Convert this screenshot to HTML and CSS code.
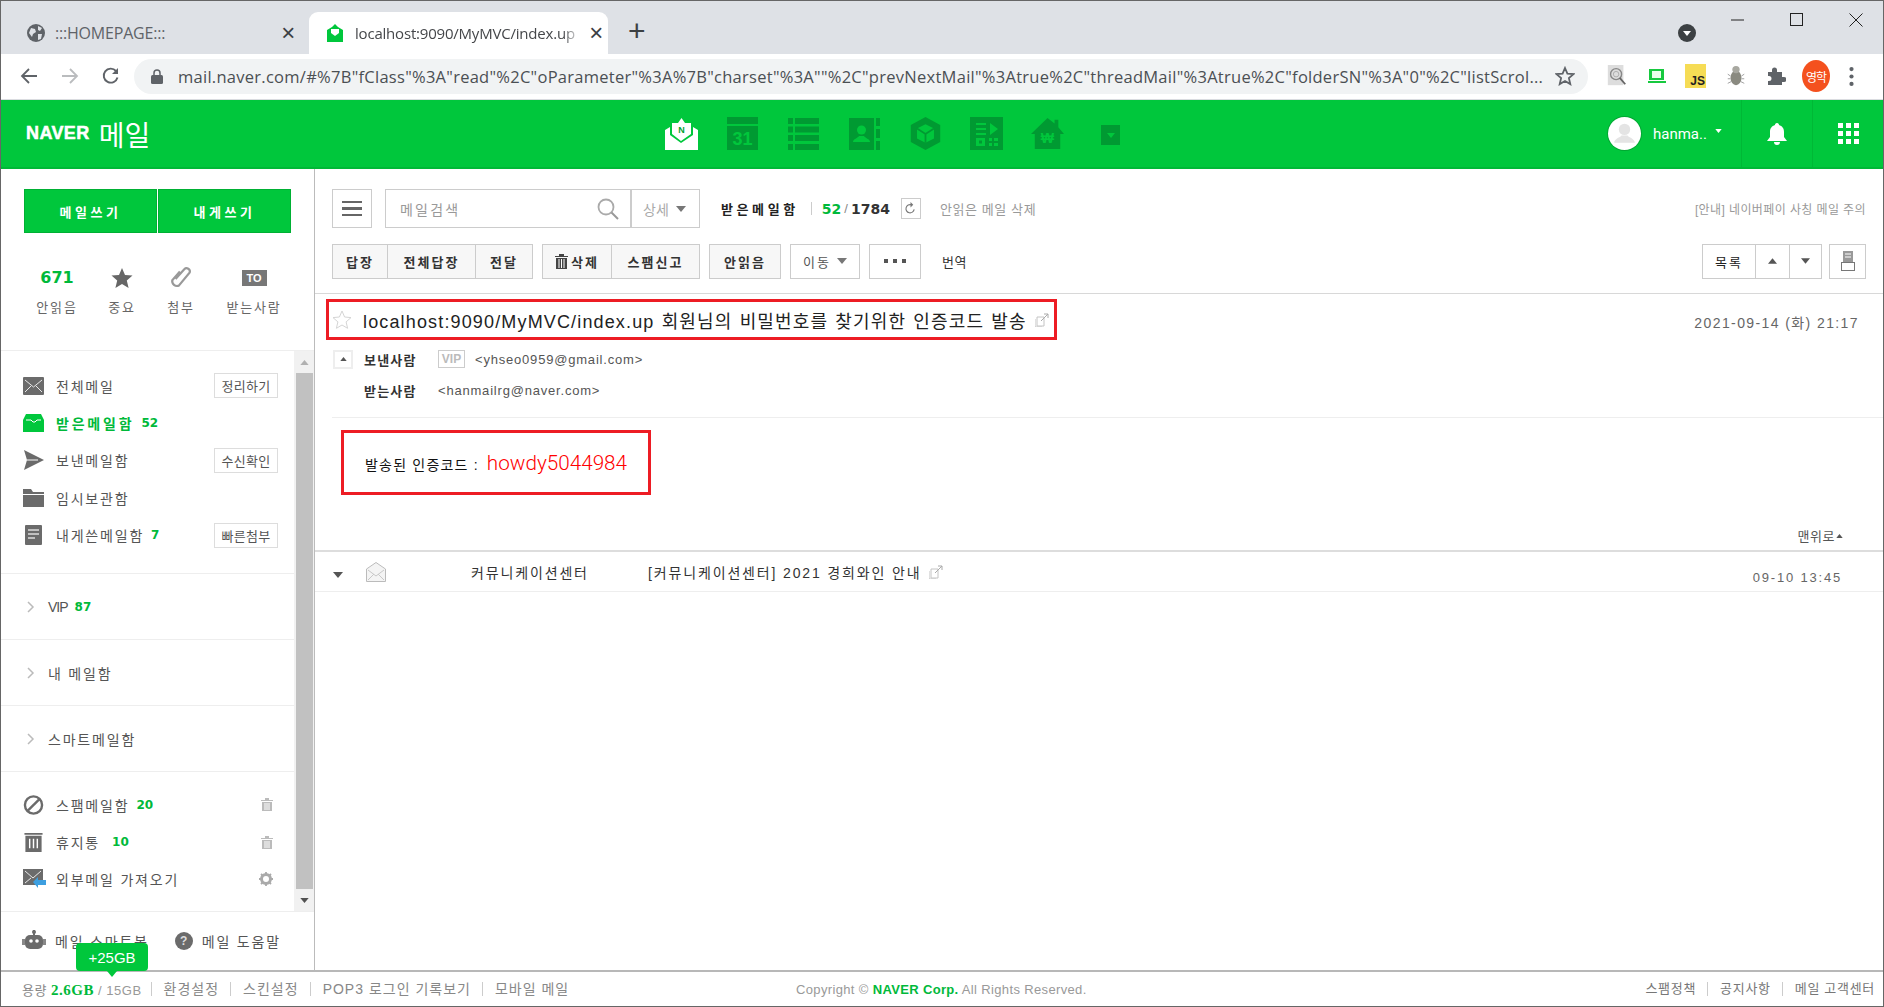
FILE: index.html
```html
<!DOCTYPE html>
<html lang="ko">
<head>
  <meta charset="UTF-8">
  <title>NAVER 메일</title>
  <link rel="stylesheet" href="styles.css">
</head>
<body>
<div class="window">

  <!-- browser tabs -->
  <div class="tabstrip">
    <div class="tab">
      <svg class="tab-icon" viewBox="0 0 18 18"><circle cx="9" cy="9" r="9" fill="#5f6368"/><path d="M4 4l4 1 1 3-3 2-1 3-3-4zM11 2l4 2-2 3-2-1zM11 10l4 0-1 5-3 1z" fill="#dee1e6"/></svg>
      <span class="tab-title">:::HOMEPAGE:::</span>
      <span class="tab-close">×</span>
    </div>
    <div class="tab tab-active">
      <svg class="tab-icon" viewBox="0 0 16 18"><path d="M0 6l5-3 3-3 3 3 5 3v12H0z" fill="#00c73c"/><path d="M4 5h8v4l-4 3-4-3z" fill="#fff"/></svg>
      <span class="tab-title fade">localhost:9090/MyMVC/index.up</span>
      <span class="tab-close">×</span>
    </div>
    <span class="tab-plus">+</span>
    <svg class="tab-search" viewBox="0 0 18 18"><circle cx="9" cy="9" r="9" fill="#3c4043"/><path d="M5 7h8l-4 5z" fill="#fff"/></svg>
    <div class="win-btns">
      <svg viewBox="0 0 14 14"><path d="M0 7h13" stroke="#222" fill="none"/></svg>
      <svg viewBox="0 0 14 14"><rect x=".5" y=".5" width="12" height="12" stroke="#222" fill="none"/></svg>
      <svg viewBox="0 0 14 14"><path d="M.5.5l13 13M13.5.5l-13 13" stroke="#222" fill="none"/></svg>
    </div>
  </div>

  <!-- address bar -->
  <div class="toolbar">
    <svg class="nav-icon" viewBox="0 0 18 18"><path d="M17 9H2M9 2L2 9l7 7" stroke="#5f6368" stroke-width="1.8" fill="none"/></svg>
    <svg class="nav-icon" viewBox="0 0 18 18"><path d="M1 9h15M9 2l7 7-7 7" stroke="#babcbe" stroke-width="1.8" fill="none"/></svg>
    <svg class="nav-icon" viewBox="0 0 18 18"><path d="M15.5 10.5A7 7 0 1 1 14 4" stroke="#5f6368" stroke-width="1.9" fill="none"/><path d="M16 1v6h-6z" fill="#5f6368"/></svg>
    <div class="addressbar">
      <svg class="lock" viewBox="0 0 12 15"><path d="M3 6V4a3 3 0 0 1 6 0v2" stroke="#5f6368" stroke-width="1.5" fill="none"/><rect y="6" width="12" height="9" rx="1.5" fill="#5f6368"/></svg>
      <span class="url">mail.naver.com/#%7B"fClass"%3A"read"%2C"oParameter"%3A%7B"charset"%3A""%2C"prevNextMail"%3Atrue%2C"threadMail"%3Atrue%2C"folderSN"%3A"0"%2C"listScrol...</span>
      <svg class="url-star" viewBox="0 0 20 20"><path d="M10 2l2.4 5.6 6.1.5-4.6 4 1.4 6L10 15l-5.3 3.1 1.4-6-4.6-4 6.1-.5z" stroke="#5f6368" stroke-width="1.8" fill="none"/></svg>
    </div>
    <div class="ext-icons">
      <svg viewBox="0 0 20 24"><rect width="17" height="22" fill="#ddd"/><circle cx="9" cy="10" r="6" fill="none" stroke="#888" stroke-width="1.5"/><circle cx="9" cy="10" r="3" fill="none" stroke="#aaa"/><path d="M13 14l6 7" stroke="#666" stroke-width="2"/></svg>
      <svg viewBox="0 0 20 20"><rect x="2" y="3" width="15" height="11" fill="#17c93f"/><rect x="5" y="5" width="9" height="7" fill="#eaffea"/><path d="M1 15h18v2H1z" fill="#17c93f"/></svg>
      <span class="ext-js">JS</span>
      <svg viewBox="0 0 20 24"><ellipse cx="10" cy="14" rx="6" ry="8" fill="#8a8a80"/><circle cx="10" cy="5" r="4" fill="#a8a8a0"/><path d="M1 10l3 2M1 15h3M1 20l4-2M19 10l-3 2M19 15h-3M19 20l-4-2" stroke="#999"/></svg>
      <svg viewBox="0 0 20 20"><path d="M2 6h4V4a2.5 2.5 0 0 1 5 0v2h5v5h2a2.5 2.5 0 0 1 0 5h-2v3H2v-4h1a2.5 2.5 0 0 0 0-5H2z" fill="#5f6368"/></svg>
      <span class="ext-user">영학</span>
      <svg class="ext-dots" viewBox="0 0 4 18"><circle cx="2" cy="2" r="2" fill="#5f6368"/><circle cx="2" cy="9" r="2" fill="#5f6368"/><circle cx="2" cy="16" r="2" fill="#5f6368"/></svg>
    </div>
  </div>

  <!-- naver header -->
  <header class="gnb">
    <div class="logo"><span class="logo-naver">NAVER</span><span class="logo-mail">메일</span></div>
    <nav class="gnb-apps">
      <svg viewBox="0 0 33 33"><path d="M0 13l5-3v8l11 8 12-8v-8l5 3v20H0z" fill="#fff"/><path d="M7 6h6l3.500-5L20 6h6v11l-10 7-9-7z" fill="#fff"/><text x="16.500" y="16" class="app-n">N</text></svg>
      <svg viewBox="0 0 33 33"><path d="M1 0h31v7H1z" fill="#009a32"/><path d="M1 9h31v24H1z" fill="#009a32"/><text x="16.500" y="28" class="app-31">31</text></svg>
      <svg viewBox="0 0 33 33"><path d="M1 1h5v6H1zM8 1h24v6H8zM1 9.500h5v6H1zM8 9.500h24v6H8zM1 18h5v6H1zM8 18h24v6H8zM1 27h5v6H1zM8 27h24v6H8z" fill="#009a32"/></svg>
      <svg viewBox="0 0 33 33"><path d="M1 1h25v32H1z" fill="#009a32"/><path d="M28 1h4v8h-4zM28 12h4v9h-4zM28 24h4v9h-4z" fill="#009a32"/><circle cx="13.500" cy="13" r="4.500" fill="#00c73c"/><path d="M5 25c0-3 5-4 6-6h5c1 2 6 3 6 6z" fill="#00c73c"/></svg>
      <svg viewBox="0 0 33 37"><path d="M16.500 0L33 9v19l-16.500 9L0 28V9z" fill="#009a32"/><path d="M16.500 8L26 13v11l-9.500 5L7 24V13z" fill="#00c73c"/><path d="M16.500 19v10M7 13l9.500 6 9.500-6" stroke="#009a32" stroke-width="2" fill="none"/></svg>
      <svg viewBox="0 0 33 33"><path d="M0 0h33v33H0z" fill="#009a32"/><path d="M6 6h10v2H6zM6 11h10v2H6zM6 16h10v2H6zM20 6l8 6-8 6z" fill="#00c73c"/><path d="M6 21h9v8H6zM19 21h3v3h-3zM24 21h4v3h-4zM19 26h3v3h-3zM24 26h4v3h-4z" fill="#00c73c"/><path d="M9 23.500h3v3H9z" fill="#009a32"/></svg>
      <svg viewBox="0 0 35 33"><path d="M17.500 0L25 6V2h4v8l6 7h-4v16H4V17H0z" fill="#009a32"/><text x="17.500" y="27" class="app-won">₩</text></svg>
      <span class="app-more"><svg viewBox="0 0 10 6"><path d="M0 0h10L5 6z" fill="#00c73c"/></svg></span>
    </nav>
    <div class="gnb-user">
      <span class="avatar"><svg viewBox="0 0 32 32"><circle cx="16" cy="12" r="5.500" fill="#e4e4e4"/><path d="M6 25c0-4 6-5 7-7h6c1 2 7 3 7 7z" fill="#e4e4e4"/></svg></span>
      <span class="user-name">hanma..</span>
      <svg class="user-caret" viewBox="0 0 8 5"><path d="M0 0h8L4 5z" fill="#fff"/></svg>
    </div>
    <div class="gnb-cell"><svg class="bell" viewBox="0 0 20 23"><path d="M10 1c1.500 0 2 1 2 2 3 1 5 3 5 7v5l3 4H0l3-4v-5c0-4 2-6 5-7 0-1 .5-2 2-2z" fill="#fff"/><path d="M7 20h6a3 3 0 0 1-6 0z" fill="#fff"/></svg></div>
    <div class="gnb-cell"><svg class="grid-ico" viewBox="0 0 21 21"><path d="M0 0h5v5H0zM8 0h5v5H8zM16 0h5v5h-5zM0 8h5v5H0zM8 8h5v5H8zM16 8h5v5h-5zM0 16h5v5H0zM8 16h5v5H8zM16 16h5v5h-5z" fill="#fff"/></svg></div>
  </header>

  <div class="content">
    <!-- left column -->
    <aside class="sidebar">
      <div class="side-top">
        <div class="write-btns">
          <a class="write-btn">메일쓰기</a>
          <a class="write-btn">내게쓰기</a>
        </div>
        <div class="quick">
          <div class="quick-item q1"><b class="quick-num">671</b><span>안읽음</span></div>
          <div class="quick-item q2"><svg viewBox="0 0 22 22"><path d="M11 1l3 7 7.500.6-5.700 5 1.800 7.400L11 17l-6.600 4 1.800-7.400L.5 8.600 8 8z" fill="#666"/></svg><span>중요</span></div>
          <div class="quick-item q3"><svg viewBox="0 0 20 22"><path d="M5 12l8-9a3 3 0 0 1 5 3l-10 12a4.500 4.500 0 0 1-6-5l7-8" stroke="#999" stroke-width="2" fill="none"/></svg><span>첨부</span></div>
          <div class="quick-item q4"><span class="to-badge">TO</span><span>받는사람</span></div>
        </div>
      </div>

      <div class="side-scroll">
        <div class="side-list">
          <div class="folder-group">
            <div class="folder">
              <svg class="folder-icon" viewBox="0 0 21 18"><rect width="21" height="18" rx="1" fill="#6b6b6b"/><path d="M2 3l8.500 7L19 3M2 15l6-6M19 15l-6-6" stroke="#e8e8e8" fill="none"/></svg>
              <span>전체메일</span><a class="mini-btn">정리하기</a>
            </div>
            <div class="folder folder-on">
              <svg class="folder-icon" viewBox="0 0 21 18"><path d="M3 0h15l3 6v12H0V6z" fill="#00c73c"/><path d="M3 6h5l2 2h2l2-2h4" stroke="#fff" fill="none"/></svg>
              <span>받은메일함</span><b class="count">52</b>
            </div>
            <div class="folder">
              <svg class="folder-icon" viewBox="0 0 21 20"><path d="M1 0l20 10L1 20l3-10zM4 10h10" fill="#6b6b6b"/><path d="M4 10h11" stroke="#fff"/></svg>
              <span>보낸메일함</span><a class="mini-btn">수신확인</a>
            </div>
            <div class="folder">
              <svg class="folder-icon" viewBox="0 0 21 18"><path d="M0 0h8l2 3h11v2H0zM0 6h21v12H0z" fill="#6b6b6b"/></svg>
              <span>임시보관함</span>
            </div>
            <div class="folder">
              <svg class="folder-icon" viewBox="0 0 21 20"><rect x="2" width="17" height="20" rx="1" fill="#6b6b6b"/><path d="M5 5h11M5 9h11M5 13h7" stroke="#ddd" stroke-width="1.500"/></svg>
              <span>내게쓴메일함</span><b class="count">7</b><a class="mini-btn">빠른첨부</a>
            </div>
          </div>
          <div class="fold-row"><svg class="chev" viewBox="0 0 8 12"><path d="M1 1l5 5-5 5" stroke="#bbb" stroke-width="1.500" fill="none"/></svg><span class="vip-text">VIP</span><b class="count">87</b></div>
          <div class="fold-row"><svg class="chev" viewBox="0 0 8 12"><path d="M1 1l5 5-5 5" stroke="#bbb" stroke-width="1.500" fill="none"/></svg><span>내 메일함</span></div>
          <div class="fold-row"><svg class="chev" viewBox="0 0 8 12"><path d="M1 1l5 5-5 5" stroke="#bbb" stroke-width="1.500" fill="none"/></svg><span>스마트메일함</span></div>
          <div class="folder-group folder-group-end">
            <div class="folder">
              <svg class="folder-icon" viewBox="0 0 21 21"><circle cx="10.500" cy="10.500" r="9" stroke="#6b6b6b" stroke-width="2.500" fill="none"/><path d="M4 17L17 4" stroke="#6b6b6b" stroke-width="2.500"/></svg>
              <span>스팸메일함</span><b class="count">20</b>
              <svg class="row-tool" viewBox="0 0 12 13"><path d="M0 2h12v1H0zM4 0h4v2H4zM1 4h10v9H1z" fill="#bbb"/><path d="M4 5v7M6 5v7M8 5v7" stroke="#fff"/></svg>
            </div>
            <div class="folder">
              <svg class="folder-icon" viewBox="0 0 21 21"><path d="M1 1h19v2H1zM2 4h17v17H2z" fill="#6b6b6b"/><path d="M6.500 7v10M10.500 7v10M14.500 7v10" stroke="#fff" stroke-width="1.500"/></svg>
              <span>휴지통</span><b class="count count-far">10</b>
              <svg class="row-tool" viewBox="0 0 12 13"><path d="M0 2h12v1H0zM4 0h4v2H4zM1 4h10v9H1z" fill="#bbb"/><path d="M4 5v7M6 5v7M8 5v7" stroke="#fff"/></svg>
            </div>
            <div class="folder">
              <svg class="folder-icon folder-icon-wide" viewBox="0 0 23 20"><rect width="20" height="16" fill="#6b6b6b"/><path d="M2 2l8 7 8-7M2 14l6-5" stroke="#e8e8e8" fill="none"/><path d="M23 11h-8V8l-5 5 5 6v-3h8z" fill="#3d9fe0"/></svg>
              <span>외부메일 가져오기</span>
              <svg class="row-tool row-gear" viewBox="0 0 14 14"><circle cx="7" cy="7" r="4.500" fill="none" stroke="#aaa" stroke-width="3"/><path d="M7 0v2M7 12v2M0 7h2M12 7h2M2 2l1.500 1.500M10.500 10.500L12 12M2 12l1.500-1.500M10.500 3.500L12 2" stroke="#aaa" stroke-width="1.800"/></svg>
            </div>
          </div>
        </div>
        <div class="scrollbar">
          <span class="scroll-arrow"><svg viewBox="0 0 10 6"><path d="M5 0l5 6H0z" fill="#b0b0b0"/></svg></span>
          <span class="scroll-thumb"></span>
          <span class="scroll-arrow"><svg viewBox="0 0 10 6"><path d="M0 0h10L5 6z" fill="#505050"/></svg></span>
        </div>
      </div>

      <div class="side-help">
        <svg class="bot" viewBox="0 0 24 22"><path d="M12 0v5" stroke="#6b6b6b" stroke-width="2"/><circle cx="12" cy="2" r="2" fill="#6b6b6b"/><rect x="3" y="5" width="18" height="14" rx="5" fill="#6b6b6b"/><path d="M0 9h3v6H0zM21 9h3v6h-3z" fill="#888"/><circle cx="9" cy="11" r="1.800" fill="#fff"/><circle cx="15" cy="11" r="1.800" fill="#fff"/></svg>
        <span class="help-text">메일 스마트봇</span>
        <span class="help-q">?</span>
        <span class="help-text">메일 도움말</span>
      </div>
    </aside>

    <!-- mail read area -->
    <main class="reader">
      <div class="search-row">
        <button class="menu-btn"><i></i><i></i><i></i></button>
        <div class="search-box">
          <span class="search-ph">메일검색</span>
          <svg class="search-ico" viewBox="0 0 22 22"><circle cx="9" cy="9" r="7.500" stroke="#aaa" stroke-width="1.800" fill="none"/><path d="M14.500 14.500L21 21" stroke="#999" stroke-width="2"/></svg>
        </div>
        <div class="search-opt">상세<svg viewBox="0 0 10 6"><path d="M0 0h10L5 6z" fill="#777"/></svg></div>
        <b class="box-name">받은메일함</b>
        <span class="box-sep"></span>
        <b class="box-unread">52</b><span class="box-slash">/</span><b class="box-total">1784</b>
        <span class="refresh"><svg viewBox="0 0 12 14"><path d="M10 8a4.500 4.500 0 1 1-3-5" stroke="#777" stroke-width="1.200" fill="none"/><path d="M6 0l3 3-3 3z" fill="#777"/></svg></span>
        <span class="del-unread">안읽은 메일 삭제</span>
        <span class="notice">[안내] 네이버페이 사칭 메일 주의</span>
      </div>

      <div class="action-row">
        <div class="btn-group">
          <a class="act act-grey w-56">답장</a><a class="act act-grey w-88">전체답장</a><a class="act act-grey w-57">전달</a>
        </div>
        <div class="btn-group">
          <a class="act act-grey w-70"><svg class="act-trash" viewBox="0 0 13 15"><path d="M0 2h13v1H0zM4 0h5v2H4zM1 4h11v11H1z" fill="#444"/><path d="M4 5v9M6.500 5v9M9 5v9" stroke="#fff"/></svg>삭제</a><a class="act act-grey w-88">스팸신고</a>
        </div>
        <div class="btn-group"><a class="act act-grey w-72">안읽음</a></div>
        <div class="btn-group"><a class="act w-70 act-plain">이동<svg class="act-caret" viewBox="0 0 10 6"><path d="M0 0h10L5 6z" fill="#777"/></svg></a></div>
        <div class="btn-group"><a class="act w-52 act-dots"><i></i><i></i><i></i></a></div>
        <span class="translate">번역</span>
        <div class="btn-group group-right">
          <a class="act w-53 act-black">목록</a>
          <a class="act w-34"><svg class="act-arrow" viewBox="0 0 10 6"><path d="M5 0l5 6H0z" fill="#555"/></svg></a>
          <a class="act w-32"><svg class="act-arrow" viewBox="0 0 10 6"><path d="M0 0h10L5 6z" fill="#555"/></svg></a>
        </div>
        <div class="btn-group">
          <a class="act w-37"><svg class="act-print" viewBox="0 0 14 20"><rect x="2" y="0" width="10" height="11" fill="#999"/><path d="M4 3h6M4 6h6" stroke="#fff"/><rect x=".5" y="11.500" width="13" height="8" fill="#fff" stroke="#777"/></svg></a>
        </div>
      </div>

      <div class="mail-head">
        <div class="subject-row">
          <h1 class="subject">
            <svg class="subject-star" viewBox="0 0 20 20"><path d="M10 1l2.600 6 6.400.6-4.900 4.300 1.500 6.400L10 15l-5.600 3.300 1.500-6.400L1 7.600 7.400 7z" stroke="#d5d5d5" fill="none"/></svg>
            <span class="subject-text">localhost:9090/MyMVC/index.up 회원님의 비밀번호를 찾기위한 인증코드 발송</span>
            <svg class="ext-link" viewBox="0 0 14 14"><path d="M2 4h7v9H2zM0 6v8h7" stroke="#c4c4c4" fill="none"/><path d="M6 8l7-7M9 1h4v4" stroke="#aaa" fill="none"/></svg>
          </h1>
          <span class="mail-date">2021-09-14 (화) 21:17</span>
        </div>
        <div class="addr-row">
          <span class="addr-toggle"><svg viewBox="0 0 8 5"><path d="M4 0l4 5H0z" fill="#555"/></svg></span>
          <b class="addr-label">보낸사람</b>
          <span class="vip-tag">VIP</span>
          <span class="addr">&lt;yhseo0959@gmail.com&gt;</span>
        </div>
        <div class="addr-row addr-row-to">
          <b class="addr-label">받는사람</b>
          <span class="addr">&lt;hanmailrg@naver.com&gt;</span>
        </div>
      </div>

      <div class="mail-body">
        <div class="code-box">
          <span class="code-label">발송된 인증코드 :</span>
          <span class="code-value">howdy5044984</span>
        </div>
      </div>
      <div class="to-top">맨위로<svg viewBox="0 0 8 5"><path d="M4 0l4 5H0z" fill="#555"/></svg></div>

      <div class="thread-row">
        <svg class="thread-caret" viewBox="0 0 10 6"><path d="M0 0h10L5 6z" fill="#555"/></svg>
        <svg class="thread-mail" viewBox="0 0 20 20"><path d="M.5 7L10 .5 19.500 7v12.500H.5z" fill="#f4f4f4" stroke="#bbb"/><path d="M2 8l8 6 8-6M2 18l6-6M18 18l-6-6" stroke="#c8c8c8" fill="none"/></svg>
        <span class="thread-from">커뮤니케이션센터</span>
        <span class="thread-subject">[커뮤니케이션센터] 2021 경희와인 안내</span>
        <svg class="ext-link" viewBox="0 0 14 14"><path d="M2 4h7v9H2zM0 6v8h7" stroke="#c4c4c4" fill="none"/><path d="M6 8l7-7M9 1h4v4" stroke="#aaa" fill="none"/></svg>
        <span class="thread-date">09-10 13:45</span>
      </div>
    </main>
  </div>

  <footer class="footer">
    <span class="tip">+25GB</span>
    <span class="quota">용량 <b>2.6GB</b> <em>/ 15GB</em></span>
    <a class="foot-link">환경설정</a>
    <a class="foot-link">스킨설정</a>
    <a class="foot-link">POP3 로그인 기록보기</a>
    <a class="foot-link">모바일 메일</a>
    <span class="copyright">Copyright © <b>NAVER Corp.</b> All Rights Reserved.</span>
    <div class="foot-right">
      <a class="foot-link">스팸정책</a>
      <a class="foot-link">공지사항</a>
      <a class="foot-link">메일 고객센터</a>
    </div>
  </footer>
</div>
</body>
</html>
```

FILE: styles.css
```css
* {
  box-sizing: border-box;
}
html, body {
  margin: 0;
  height: 100%;
  overflow: hidden;
}
body {
  font-family: "Liberation Sans", "Noto Sans CJK KR", sans-serif;
  font-size: 13px;
  color: #333;
  background: #fff;
}
svg {
  display: block;
  flex: none;
}
i, em {
  font-style: normal;
}
.window {
  height: 1007px;
  border: 1px solid #666;
  display: flex;
  flex-direction: column;
}

/* browser tabs */
.tabstrip {
  height: 53px;
  background: #dee1e6;
  display: flex;
  align-items: flex-end;
  flex: none;
}
.tab {
  width: 299px;
  height: 42px;
  display: flex;
  align-items: center;
  padding: 0 5px 0 26px;
  font-family: "Open Sans", sans-serif;
  font-size: 16px;
  letter-spacing: -0.2px;
  color: #5f6368;
}
.tab-active {
  background: #fff;
  border-radius: 9px 9px 0 0;
  color: #45474a;
  padding-left: 18px;
  margin-left: 9px;
  font-size: 15px;
}
.tab-icon {
  width: 18px;
  height: 18px;
  margin-right: 10px;
}
.tab-active .tab-icon {
  width: 16px;
  margin-right: 12px;
}
.tab-title {
  flex: 1;
  white-space: nowrap;
  overflow: hidden;
}
.fade {
  -webkit-mask-image: linear-gradient(to right, #000 92%, transparent);
  mask-image: linear-gradient(to right, #000 92%, transparent);
}
.tab-close {
  font-family: "Liberation Sans", sans-serif;
  font-size: 24px;
  line-height: 24px;
  color: #3c4043;
  margin-left: 8px;
}
.tab-plus {
  font-family: "Liberation Sans", sans-serif;
  font-size: 30px;
  color: #3c4043;
  height: 42px;
  line-height: 38px;
  margin-left: 20px;
}
.tab-search {
  width: 18px;
  height: 18px;
  margin: 0 0 12px auto;
}
.win-btns {
  align-self: flex-start;
  display: flex;
  gap: 45px;
  margin: 12px 20px 0 35px;
}
.win-btns svg {
  width: 14px;
  height: 14px;
}

/* address bar */
.toolbar {
  height: 46px;
  flex: none;
  background: #fff;
  border-bottom: 1px solid #dadce0;
  display: flex;
  align-items: center;
  padding: 0 0 1px 19px;
}
.nav-icon {
  width: 18px;
  height: 18px;
  margin-right: 23px;
}
.addressbar {
  width: 1454px;
  height: 35px;
  margin-left: -9px;
  border-radius: 18px;
  background: #f1f3f4;
  display: flex;
  align-items: center;
  padding: 0 13px 0 17px;
}
.lock {
  width: 12px;
  height: 15px;
  margin-right: 15px;
}
.url {
  font-family: "Open Sans", sans-serif;
  font-size: 16.500px;
  letter-spacing: 0.270px;
  color: #4b4f53;
  flex: 1;
  white-space: nowrap;
  overflow: hidden;
}
.url-star {
  width: 20px;
  height: 20px;
}
.ext-icons {
  display: flex;
  align-items: center;
  gap: 20px;
  margin-left: 19px;
}
.ext-icons svg {
  width: 20px;
  height: 22px;
}
.ext-js {
  width: 21px;
  height: 24px;
  background: #f6dc55;
  font-size: 12px;
  font-weight: bold;
  color: #222;
  display: flex;
  align-items: flex-end;
  justify-content: flex-end;
  padding-right: 1px;
  margin: 0 0 0 -2px;
}
.ext-user {
  width: 28px;
  height: 32px;
  border-radius: 50%;
  background: #f4511e;
  color: #fff;
  font-size: 12px;
  letter-spacing: -1px;
  display: flex;
  align-items: center;
  justify-content: center;
  margin: 0 -3px 0 -4px;
}
.ext-icons .ext-dots {
  width: 5px;
  height: 19px;
  margin-left: 2px;
}

/* naver header */
.gnb {
  height: 69px;
  flex: none;
  background: #00c73c;
  border-bottom: 2px solid #00b836;
  display: flex;
  align-items: center;
  color: #fff;
}
.logo {
  display: flex;
  align-items: center;
  width: 664px;
  padding-left: 25px;
}
.logo-naver {
  font-size: 18px;
  font-weight: bold;
  letter-spacing: 0.400px;
  -webkit-text-stroke: 0.500px #fff;
  margin-right: 9px;
}
.logo-mail {
  font-family: "Noto Sans CJK KR", sans-serif;
  font-size: 28px;
  line-height: 32px;
}
.gnb-apps {
  display: flex;
  align-items: center;
  gap: 28px;
}
.gnb-apps svg {
  width: 33px;
  height: 33px;
}
.app-n {
  font-size: 9px;
  font-weight: bold;
  fill: #00a032;
  text-anchor: middle;
}
.app-31 {
  font-size: 18px;
  font-weight: bold;
  fill: #00c73c;
  text-anchor: middle;
}
.app-won {
  font-size: 15px;
  font-weight: bold;
  fill: #00c73c;
  text-anchor: middle;
}
.gnb-apps .app-more {
  width: 19px;
  height: 20px;
  background: #009a32;
  display: flex;
  align-items: center;
  justify-content: center;
  margin: 3px 0 0 9px;
}
.gnb-apps .app-more svg {
  width: 8px;
  height: 5px;
}
.gnb-user {
  margin-left: auto;
  display: flex;
  align-items: center;
  width: 133px;
}
.avatar {
  width: 33px;
  height: 33px;
  border-radius: 50%;
  background: #fff;
  box-shadow: 0 0 0 1px #00a832;
  margin-right: 12px;
}
.user-name {
  font-family: "Roboto", sans-serif;
  font-size: 15px;
  width: 62px;
}
.user-caret {
  width: 7px;
  height: 4px;
  margin-top: -5px;
}
.gnb-cell {
  width: 71px;
  height: 67px;
  border-left: 1px solid #00b836;
  display: flex;
  align-items: center;
  justify-content: center;
}
.bell {
  width: 20px;
  height: 23px;
}
.grid-ico {
  width: 21px;
  height: 21px;
}

.content {
  flex: 1;
  display: flex;
  min-height: 0;
}

/* left column */
.sidebar {
  width: 314px;
  flex: none;
  border-right: 1px solid #bbb;
  display: flex;
  flex-direction: column;
}
.side-top {
  height: 182px;
  padding: 20px 0 0 23px;
  border-bottom: 1px solid #eee;
  flex: none;
}
.write-btns {
  display: flex;
  gap: 1px;
}
.write-btn {
  width: 133px;
  height: 44px;
  background: #00c73c;
  border: 1px solid #00b034;
  color: #fff;
  font-family: "Noto Sans CJK KR", sans-serif;
  font-weight: bold;
  font-size: 13px;
  letter-spacing: 3.500px;
  display: flex;
  align-items: center;
  justify-content: center;
}
.quick {
  display: flex;
  margin-top: 33px;
}
.quick-item {
  display: flex;
  flex-direction: column;
  align-items: center;
  color: #666;
  letter-spacing: 1.800px;
}
.quick-item svg, .quick-num, .to-badge {
  height: 24px;
  margin-bottom: 8px;
}
.quick-item svg {
  width: 22px;
}
.q1 { width: 66px; }
.q2 { width: 64px; }
.q3 { width: 54px; }
.q4 { width: 92px; }
.quick-item span {
  line-height: 20px;
}
.quick-num {
  font-family: "DejaVu Sans", sans-serif;
  font-size: 16px;
  line-height: 24px;
  color: #00b93a;
  letter-spacing: 0;
}
.quick-item .to-badge {
  width: 25px;
  height: 16px;
  margin: 4px 0 12px;
  background: #777;
  color: #fff;
  font-size: 11px;
  font-weight: bold;
  line-height: 16px;
  text-align: center;
  letter-spacing: 0;
}
.side-scroll {
  flex: 1;
  display: flex;
  min-height: 0;
  border-bottom: 1px solid #eee;
}
.side-list {
  flex: 1;
  min-width: 0;
}
.folder-group {
  padding: 16px 0 19px;
  height: 223px;
  border-bottom: 1px solid #eee;
}
.folder-group-end {
  border-bottom: none;
  padding-top: 14px;
  height: 138px;
}
.folder {
  height: 37.400px;
  display: flex;
  align-items: center;
  padding-left: 22px;
  color: #555;
  font-size: 14px;
  letter-spacing: 1.800px;
}
.folder-icon {
  width: 21px;
  height: 20px;
  margin-right: 12px;
}
.folder-icon-wide {
  width: 23px;
  margin-right: 10px;
}
.folder-on {
  color: #00b93a;
  font-weight: bold;
  letter-spacing: 2.800px;
}
.count {
  font-family: "DejaVu Sans", sans-serif;
  font-size: 12px;
  font-weight: bold;
  color: #00b93a;
  letter-spacing: 0;
  margin-left: 7px;
}
.count-far {
  margin-left: 12px;
}
.mini-btn {
  margin-left: auto;
  margin-right: 16px;
  width: 64px;
  height: 25px;
  border: 1px solid #ddd;
  color: #555;
  font-size: 13px;
  letter-spacing: 0.300px;
  display: flex;
  align-items: center;
  justify-content: center;
}
.row-tool {
  width: 12px;
  height: 13px;
  margin-left: auto;
  margin-right: 21px;
}
.row-gear {
  width: 14px;
  height: 14px;
  margin-right: 21px;
}
.fold-row {
  height: 66px;
  border-bottom: 1px solid #eee;
  display: flex;
  align-items: center;
  padding-left: 26px;
  color: #555;
  font-size: 14px;
  letter-spacing: 1.800px;
}
.vip-text {
  letter-spacing: -1px;
}
.chev {
  width: 8px;
  height: 12px;
  margin-right: 13px;
}
.scrollbar {
  width: 20px;
  flex: none;
  background: #f1f1f1;
  display: flex;
  flex-direction: column;
  align-items: center;
}
.scroll-arrow {
  height: 22px;
  width: 100%;
  display: flex;
  align-items: center;
  justify-content: center;
}
.scroll-arrow svg {
  width: 9px;
  height: 5px;
}
.scroll-thumb {
  flex: 1;
  width: 17px;
  background: #c1c1c1;
}
.side-help {
  height: 58px;
  flex: none;
  display: flex;
  align-items: center;
  padding-left: 21px;
  color: #555;
  font-size: 14px;
  letter-spacing: 1.800px;
}
.bot {
  width: 24px;
  height: 22px;
  margin-right: 9px;
}
.help-text {
  white-space: nowrap;
}
.help-q {
  width: 18px;
  height: 18px;
  border-radius: 50%;
  background: #6b6b6b;
  color: #ddd;
  font-size: 12px;
  font-weight: bold;
  letter-spacing: 0;
  display: flex;
  align-items: center;
  justify-content: center;
  margin: 0 9px 0 26px;
}

/* mail read area */
.reader {
  flex: 1;
  min-width: 0;
}
.search-row {
  display: flex;
  align-items: center;
  padding: 20px 17px 0 17px;
  height: 59px;
}
.menu-btn {
  width: 40px;
  height: 39px;
  background: #fff;
  border: 1px solid #ccc;
  padding: 0;
  margin-right: 13px;
  display: flex;
  flex-direction: column;
  align-items: center;
  justify-content: center;
  gap: 4px;
}
.menu-btn i {
  width: 20px;
  height: 2.500px;
  background: #666;
}
.search-box {
  width: 247px;
  height: 39px;
  border: 1px solid #ccc;
  border-right-width: 2px;
  display: flex;
  align-items: center;
  justify-content: space-between;
  padding: 0 11px 0 14px;
  color: #999;
  font-size: 14px;
  letter-spacing: 2.200px;
}
.search-ico {
  width: 22px;
  height: 22px;
}
.search-opt {
  width: 68px;
  height: 39px;
  border: 1px solid #ccc;
  border-left: none;
  color: #aaa;
  display: flex;
  align-items: center;
  gap: 7px;
  padding-left: 11px;
  font-size: 14px;
}
.search-opt svg {
  width: 10px;
  height: 6px;
}
.box-name {
  margin-left: 21px;
  font-size: 13px;
  letter-spacing: 3.600px;
  color: #222;
}
.box-sep {
  width: 1px;
  height: 13px;
  background: #ccc;
  margin: 0 10px 0 12px;
}
.box-unread, .box-total {
  font-family: "DejaVu Sans", sans-serif;
  font-size: 14px;
  color: #00b93a;
}
.box-total {
  color: #333;
}
.box-slash {
  color: #888;
  margin: 0 3px;
}
.refresh {
  width: 20px;
  height: 21px;
  border: 1px solid #ccc;
  margin-left: 11px;
  display: flex;
  align-items: center;
  justify-content: center;
}
.refresh svg {
  width: 11px;
  height: 13px;
}
.del-unread {
  margin-left: 19px;
  color: #999;
  letter-spacing: 0.600px;
}
.notice {
  margin-left: auto;
  color: #999;
  font-size: 12px;
  letter-spacing: 0.400px;
}
.action-row {
  display: flex;
  align-items: center;
  padding: 16px 17px 15px 17px;
  height: 66px;
  border-bottom: 1px solid #d8d8d8;
}
.btn-group {
  display: flex;
  height: 35px;
  margin-right: 9px;
}
.act {
  height: 35px;
  border: 1px solid #ccc;
  margin-left: -1px;
  display: flex;
  align-items: center;
  justify-content: center;
  color: #333;
  font-weight: bold;
  letter-spacing: 2px;
}
.btn-group .act:first-child {
  margin-left: 0;
}
.act-grey {
  background: #f7f7f7;
}
.act-plain {
  font-weight: normal;
  color: #555;
  gap: 6px;
}
.act-black {
  font-weight: normal;
  color: #222;
}
.w-32 { width: 33px; }
.w-34 { width: 35px; }
.w-37 { width: 37px; }
.w-52 { width: 52px; }
.w-53 { width: 54px; }
.w-56 { width: 56px; }
.w-57 { width: 58px; }
.w-70 { width: 70px; }
.w-72 { width: 72px; }
.w-88 { width: 89px; }
.act-trash {
  width: 13px;
  height: 15px;
  margin-right: 3px;
}
.act-caret {
  width: 10px;
  height: 6px;
}
.act-dots {
  gap: 5px;
}
.act-dots i {
  width: 4px;
  height: 4px;
  background: #555;
}
.translate {
  margin-left: 12px;
  color: #333;
  letter-spacing: 0.500px;
}
.group-right {
  margin-left: auto;
  margin-right: 7px;
}
.btn-group:last-child {
  margin-right: 0;
}
.act-arrow {
  width: 9px;
  height: 6px;
}
.act-print {
  width: 14px;
  height: 20px;
}
.mail-head {
  height: 124px;
  border-bottom: 1px solid #eee;
  margin-left: 17px;
}
.subject-row {
  display: flex;
  align-items: center;
  justify-content: space-between;
  padding: 5px 24px 0 0;
  margin-left: -6px;
}
.subject {
  width: 731px;
  height: 41px;
  margin: 0;
  border: 3px solid #ed1c24;
  display: flex;
  align-items: center;
  padding-left: 3px;
  font-size: 18px;
  font-weight: normal;
  color: #222;
  white-space: nowrap;
}
.subject-star {
  width: 20px;
  height: 20px;
  margin-right: 11px;
}
.subject-text {
  letter-spacing: 1.150px;
  word-spacing: 1px;
}
.ext-link {
  width: 14px;
  height: 14px;
  margin-left: 8px;
}
.mail-date {
  color: #666;
  font-size: 14px;
  letter-spacing: 1.400px;
  margin-top: 4px;
}
.addr-row {
  display: flex;
  align-items: center;
  height: 20px;
  margin-top: 9px;
  font-size: 13px;
  color: #555;
}
.addr-row-to {
  margin-top: 11px;
  padding-left: 32px;
}
.addr-toggle {
  width: 20px;
  height: 19px;
  border: 2px solid #eee;
  display: flex;
  align-items: center;
  justify-content: center;
  margin-left: 1px;
  margin-right: 11px;
}
.addr-toggle svg {
  width: 7px;
  height: 4px;
}
.addr-label {
  color: #333;
  letter-spacing: 1.200px;
  width: 64px;
}
.addr-row-to .addr-label {
  width: 74px;
}
.vip-tag {
  width: 27px;
  height: 18px;
  margin: 0 10px;
  border: 1px solid #ccc;
  color: #bbb;
  font-size: 12px;
  font-weight: bold;
  text-align: center;
  line-height: 16px;
}
.addr {
  letter-spacing: 0.800px;
}
.mail-body {
  padding: 12px 0 0 26px;
  height: 78px;
}
.code-box {
  width: 310px;
  height: 65px;
  border: 3px solid #ed1c24;
  display: flex;
  align-items: center;
  padding-left: 21px;
  gap: 8px;
}
.code-label {
  color: #111;
  font-size: 14px;
  letter-spacing: 1.200px;
  margin-top: 2px;
}
.code-value {
  font-family: "Roboto", sans-serif;
  font-weight: 300;
  color: #f00;
  font-size: 20.700px;
  line-height: 24px;
}
.to-top {
  display: flex;
  align-items: center;
  justify-content: flex-end;
  gap: 1px;
  height: 56px;
  padding: 25px 40px 0 0;
  border-bottom: 2px solid #ddd;
  color: #555;
  font-size: 13px;
  letter-spacing: 0.500px;
}
.to-top svg {
  width: 7px;
  height: 4px;
}
.thread-row {
  display: flex;
  align-items: center;
  height: 40px;
  border-bottom: 1px solid #eee;
  color: #333;
  font-size: 14px;
  letter-spacing: 1.850px;
  padding-left: 18px;
}
.thread-caret {
  width: 10px;
  height: 6px;
  margin: 6px 23px 0 0;
}
.thread-mail {
  width: 20px;
  height: 20px;
  margin-right: 85px;
}
.thread-from {
  width: 177px;
}
.thread-date {
  margin-left: auto;
  margin-right: 41px;
  color: #666;
  font-size: 13px;
  margin-top: 12px;
  letter-spacing: 1.800px;
}

/* bottom bar */
.footer {
  height: 36px;
  flex: none;
  border-top: 2px solid #b8b8b8;
  display: flex;
  align-items: center;
  position: relative;
  padding: 0 8px 0 21px;
  color: #888;
  font-size: 13px;
  letter-spacing: 0.500px;
}
.tip {
  position: absolute;
  left: 75px;
  top: -29px;
  width: 72px;
  height: 28px;
  border-radius: 4px;
  background: #00c73c;
  color: #fff;
  font-size: 15px;
  letter-spacing: 0;
  display: flex;
  align-items: center;
  justify-content: center;
}
.tip::after {
  content: "";
  position: absolute;
  left: 31px;
  bottom: -6px;
  border: 5px solid transparent;
  border-bottom: none;
  border-top: 6px solid #00c73c;
}
.quota {
  margin-right: -2px;
}
.quota b {
  color: #00b93a;
  font-family: "Liberation Serif", serif;
  font-size: 15px;
}
.quota em {
  color: #999;
}
.foot-link {
  padding-left: 12px;
  margin-left: 11px;
  border-left: 1px solid #ccc;
  line-height: 14px;
  font-size: 14px;
  letter-spacing: 1px;
}
.copyright {
  position: absolute;
  left: 795px;
  letter-spacing: 0.350px;
  font-size: 13px;
  color: #999;
}
.copyright b {
  color: #00b93a;
}
.foot-right {
  margin-left: auto;
  display: flex;
  color: #777;
}
.foot-right .foot-link {
  font-size: 13px;
  letter-spacing: 0.700px;
}
.foot-right .foot-link:first-child {
  border-left: none;
}
```
